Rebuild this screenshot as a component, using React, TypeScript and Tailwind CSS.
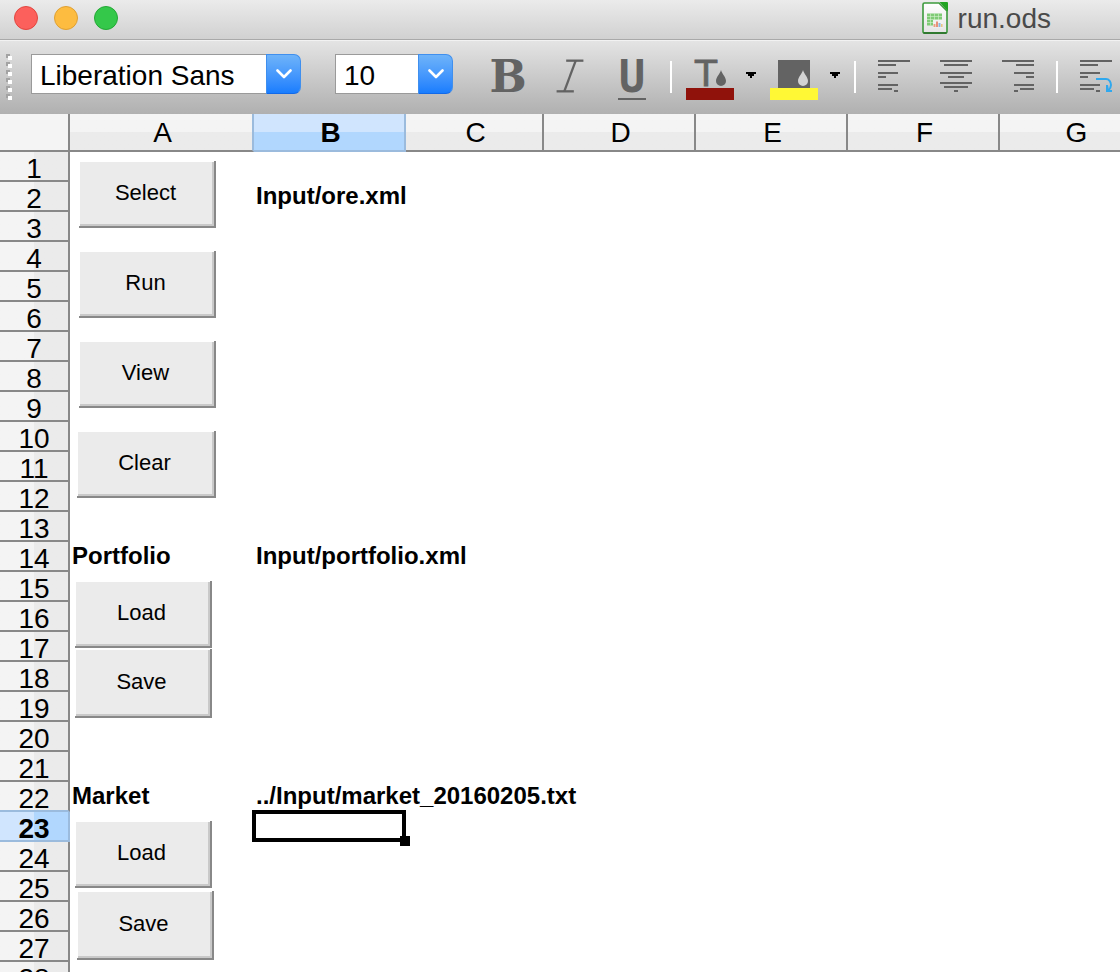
import React from "react";
import { Italic } from "lucide-react";

type Column = { name: string; width: string };

const columns: Column[] = [
  { name: "A", width: "w-[184px]" },
  { name: "B", width: "w-[152px]" },
  { name: "C", width: "w-[138px]" },
  { name: "D", width: "w-[152px]" },
  { name: "E", width: "w-[152px]" },
  { name: "F", width: "w-[152px]" },
  { name: "G", width: "w-[152px]" },
];

const rows = Array.from({ length: 28 }, (_, i) => i + 1);

const cellText: Record<string, string> = {
  B2: "Input/ore.xml",
  A14: "Portfolio",
  B14: "Input/portfolio.xml",
  A22: "Market",
  B22: "../Input/market_20160205.txt",
};

/* Form controls float above the grid, each anchored to a cell. */
const controls: Record<string, { label: string; place: string }> = {
  A1: { label: "Select", place: "left-[9px] top-[9px] w-[137px] h-[67px]" },
  A4: { label: "Run", place: "left-[9px] top-[9px] w-[137px] h-[67px]" },
  A7: { label: "View", place: "left-[9px] top-[9px] w-[137px] h-[67px]" },
  A10: { label: "Clear", place: "left-[7px] top-[9px] w-[139px] h-[67px]" },
  A15: { label: "Load", place: "left-[5px] top-[9px] w-[137px] h-[67px]" },
  A17: { label: "Save", place: "left-[5px] top-[17px] w-[137px] h-[69px]" },
  A23: { label: "Load", place: "left-[5px] top-[9px] w-[137px] h-[67px]" },
  A25: { label: "Save", place: "left-[7px] top-[19px] w-[137px] h-[69px]" },
};

const ACTIVE_COLUMN = "B";
const ACTIVE_ROW = 23;

function TrafficLight({ label, tone }: { label: string; tone: string }) {
  return <button aria-label={label} className={`size-6 rounded-full border ${tone}`} />;
}

function DocumentIcon() {
  return (
    <svg width="26" height="32" viewBox="0 0 26 32" aria-hidden="true">
      <defs>
        <linearGradient id="paper" x1="0" y1="0" x2="0" y2="1">
          <stop offset="0" stopColor="#ffffff" />
          <stop offset="1" stopColor="#e4e4e4" />
        </linearGradient>
      </defs>
      <path d="M2.500 1H17l8 8v20.500a1.500 1.500 0 0 1-1.500 1.500h-21A1.500 1.500 0 0 1 1 29.500v-27A1.500 1.500 0 0 1 2.500 1z" fill="url(#paper)" stroke="#3c9a3c" strokeWidth="1.600" />
      <path d="M1.500 31h23" stroke="#1f6a1f" strokeWidth="1.500" />
      <path d="M17.500 0H25a1 1 0 0 1 1 1v8.500z" fill="#22a322" />
      <rect x="5" y="11.500" width="15" height="12" fill="#7fcb76" />
      <path d="M5 14.500h15M5 17.500h15M5 20.500h15M8.500 11.500v12M12.500 11.500v12M16.500 11.500v12" stroke="#d6f1d2" strokeWidth="0.600" />
      <rect x="11" y="18" width="10" height="7.500" fill="#f1f1f1" />
      <path d="M12.500 25v-3" stroke="#e9a07c" strokeWidth="2" />
      <path d="M15 25v-5.500" stroke="#e8917a" strokeWidth="2" />
      <path d="M17.500 25v-4" stroke="#8ab6e0" strokeWidth="2" />
      <path d="M19.800 25v-3" stroke="#e8c583" strokeWidth="1.600" />
    </svg>
  );
}

function TitleBar() {
  return (
    <header className="flex h-10 shrink-0 items-center border-b border-[#a9a9a9] bg-linear-to-b from-[#ebebeb] to-[#d1d1d1] pr-[69px] pb-[3px] pl-[14px]">
      <div className="flex gap-4">
        <TrafficLight label="Close" tone="border-[#e2463f] bg-[#fc605c]" />
        <TrafficLight label="Minimize" tone="border-[#dfa032] bg-[#fdbc40]" />
        <TrafficLight label="Zoom" tone="border-[#23a835] bg-[#34c84a]" />
      </div>
      <div className="ml-auto flex items-center gap-[10px]">
        <DocumentIcon />
        <h1 className="pt-0.5 text-[28px] leading-8 text-[#4a4a4a]">run.ods</h1>
      </div>
    </header>
  );
}

function Combo({ label, value, width }: { label: string; value: string; width: string }) {
  return (
    <div className={`flex h-10 shrink-0 ${width}`}>
      <input
        aria-label={label}
        defaultValue={value}
        className="h-10 min-w-0 flex-1 border border-r-0 border-[#9a9a9a] bg-white pt-1 pl-2 text-[28px] leading-8 text-black outline-none"
      />
      <button
        aria-label={`${label} list`}
        className="flex w-[35px] shrink-0 items-center justify-center rounded-r-[7px] border border-[#3f8fee] border-b-[#1269e8] bg-linear-to-b from-[#6eb3f9] to-[#187dfe]"
      >
        <svg width="16" height="10" viewBox="0 0 16 10" fill="none" aria-hidden="true">
          <path d="M1.500 1.500L8 8l6.500-6.500" stroke="#fff" strokeWidth="2.600" strokeLinecap="round" strokeLinejoin="round" />
        </svg>
      </button>
    </div>
  );
}

function ToolIcon({ label, width, children }: { label: string; width: number; children: React.ReactNode }) {
  return (
    <button aria-label={label} className="shrink-0">
      <svg width={width} height="48" viewBox={`0 0 ${width} 48`} fill="#636363" className="block overflow-visible" aria-hidden="true">
        {children}
      </svg>
    </button>
  );
}

function Lines({ items }: { items: number[][] }) {
  return (
    <>
      {items.map(([x, y, w], i) => (
        <rect key={i} x={x} y={y} width={w} height="2" />
      ))}
    </>
  );
}

function DropArrow({ label }: { label: string }) {
  return (
    <ToolIcon label={label} width={10}>
      <path d="M0 18h10v2H8v2H6v2H4v-2H2v-2H0z" fill="#000" />
    </ToolIcon>
  );
}

function Separator() {
  return <div className="mt-[7px] h-8 w-0.5 shrink-0 bg-white" />;
}

function Toolbar() {
  return (
    <div
      role="toolbar"
      aria-label="Formatting"
      className="flex h-[74px] shrink-0 items-start overflow-hidden border-t border-[#f2f2f2] bg-linear-to-b from-[#e4e4e4] to-[#b0b0b0] pt-[13px] pl-1.5"
    >
      <svg width="6" height="48" viewBox="0 0 6 48" className="shrink-0" aria-hidden="true">
        {[0, 8, 16, 24, 32, 40].map((y) => (
          <g key={y}>
            <rect x="0" y={y} width="4" height="4" fill="#a3a3a3" />
            <rect x="2" y={y + 2} width="4" height="4" fill="#fff" />
          </g>
        ))}
      </svg>
      <div className="ml-[19px] flex shrink-0 gap-[34px]">
        <Combo label="Font name" value="Liberation Sans" width="w-[270px]" />
        <Combo label="Font size" value="10" width="w-[118px]" />
      </div>
      <div className="ml-[39px] flex shrink-0 gap-[30px]">
        <ToolIcon label="Bold" width={32}>
          <text x="16" y="38" textAnchor="middle" className="font-['DejaVu_Serif'] text-[44px] font-bold">B</text>
        </ToolIcon>
        <ToolIcon label="Italic" width={32}>
          <Italic x={-7} y={-1} width={46} height={46} stroke="#636363" strokeWidth={1.2} strokeLinecap="butt" />
        </ToolIcon>
        <ToolIcon label="Underline" width={32}>
          <text x="16" y="38" textAnchor="middle" className="font-['DejaVu_Sans_Mono'] text-[44px] font-bold">U</text>
          <rect x="2" y="44" width="28" height="2" />
        </ToolIcon>
      </div>
      <div className="ml-[22px] flex shrink-0 gap-[14px]">
        <Separator />
        <div className="flex gap-3">
          <ToolIcon label="Font color" width={48}>
            <text x="20" y="32" textAnchor="middle" stroke="#636363" strokeWidth="0.8" className="font-['DejaVu_Sans'] text-[36px]">T</text>
            <path d="M35 16c1 4 5 7 5 11a5 5 0 0 1-10 0c0-4 4-7 5-11z" />
            <rect y="34" width="48" height="12" fill="#90120b" />
          </ToolIcon>
          <DropArrow label="Font color list" />
        </div>
        <div className="flex gap-3">
          <ToolIcon label="Highlighting color" width={48}>
            <rect x="8" y="6" width="32" height="28" />
            <path d="M33 16c1 4 5 7 5 11a5 5 0 0 1-10 0c0-4 4-7 5-11z" fill="#d3d3d3" />
            <rect y="34" width="48" height="12" fill="#fff835" />
          </ToolIcon>
          <DropArrow label="Highlighting color list" />
        </div>
        <Separator />
      </div>
      <div className="ml-[22px] flex shrink-0 gap-[30px]">
        <ToolIcon label="Align left" width={32}>
          <Lines items={[[0, 6, 32], [0, 10, 18], [0, 18, 20], [0, 22, 8], [0, 30, 20], [0, 34, 14], [16, 36, 4]]} />
        </ToolIcon>
        <ToolIcon label="Align center" width={32}>
          <Lines items={[[0, 6, 32], [4, 10, 24], [0, 18, 32], [8, 22, 16], [0, 28, 32], [4, 32, 24], [14, 36, 4]]} />
        </ToolIcon>
        <ToolIcon label="Align right" width={32}>
          <Lines items={[[0, 6, 32], [14, 10, 18], [12, 18, 20], [24, 22, 8], [12, 30, 20], [18, 34, 14], [12, 36, 4]]} />
        </ToolIcon>
      </div>
      <div className="ml-[22px] flex shrink-0 gap-[22px]">
        <Separator />
        <ToolIcon label="Wrap text" width={32}>
          <Lines items={[[0, 6, 32], [0, 10, 18], [0, 18, 20], [0, 22, 8], [0, 30, 20], [0, 34, 14], [16, 36, 4]]} />
          <path d="M16 25h10c3 0 5 3 5 6 0 2-1 4-3 6" fill="none" stroke="#2fa8ee" strokeWidth="2" />
          <path d="M26 31v7h6v-2h-3l-1-5z" fill="#2fa8ee" />
        </ToolIcon>
      </div>
    </div>
  );
}

function ColumnHeader({ column, index }: { column: Column; index: number }) {
  const active = column.name === ACTIVE_COLUMN;
  const beforeActive = columns[index + 1]?.name === ACTIVE_COLUMN;
  const tone = active
    ? "border-[#9bbbdd] bg-linear-to-b from-[#d0e5fe] from-50% to-[#b1d7fe] to-50% font-bold"
    : beforeActive
      ? "border-r-[#9bbbdd] border-b-[#888888] bg-linear-to-b from-[#f4f4f4] from-50% to-[#ebebeb] to-50% font-normal"
      : "border-[#888888] bg-linear-to-b from-[#f4f4f4] from-50% to-[#ebebeb] to-50% font-normal";
  return (
    <th scope="col" className={`border-r-2 border-b-2 p-0 text-center ${column.width} ${tone}`}>
      <div className="h-9 pl-[3px] leading-[38px]">{column.name}</div>
    </th>
  );
}

function RowHeader({ row }: { row: number }) {
  const active = row === ACTIVE_ROW;
  const beforeActive = row + 1 === ACTIVE_ROW;
  const tone = active
    ? "border-[#9bbbdd] bg-linear-to-r from-[#d0e5fe] from-50% to-[#b1d7fe] to-50% font-bold"
    : beforeActive
      ? "border-r-[#888888] border-b-[#9bbbdd] bg-linear-to-r from-[#f4f4f4] from-50% to-[#ebebeb] to-50% font-normal"
      : "border-[#888888] bg-linear-to-r from-[#f4f4f4] from-50% to-[#ebebeb] to-50% font-normal";
  return (
    <th scope="row" className={`border-r-2 border-b-2 p-0 text-center text-[28px] ${tone}`}>
      <div className="h-7 leading-[34px]">{row}</div>
    </th>
  );
}

function Cell({ id }: { id: string }) {
  const control = controls[id];
  return (
    <td className="relative p-0 text-2xl leading-[28px] font-bold whitespace-nowrap">
      {cellText[id] && <span className="block h-[30px] pl-0.5">{cellText[id]}</span>}
      {control && (
        <button
          className={`absolute z-10 border-r-2 border-b-2 border-[#888888] bg-[#ebebeb] pr-0.5 pb-0.5 text-[22px] leading-6 font-normal shadow-[inset_1px_1px_0_#ffffff,inset_-2px_-2px_0_#c9c9c9] ${control.place}`}
        >
          {control.label}
        </button>
      )}
      {id === `${ACTIVE_COLUMN}${ACTIVE_ROW}` && (
        <div className="absolute -top-0.5 right-0 bottom-0 -left-0.5 z-10 border-4 border-black">
          <div className="absolute -right-2 -bottom-2 size-[10px] bg-black" />
        </div>
      )}
    </td>
  );
}

export default function App() {
  return (
    <div className="flex h-screen flex-col overflow-hidden bg-white font-['Liberation_Sans',Arial,sans-serif] text-black">
      <TitleBar />
      <Toolbar />
      <main className="min-h-0 flex-1 overflow-hidden">
        <table className="w-[1152px] table-fixed border-separate border-spacing-0">
          <thead className="text-[28px]">
            <tr>
              <td className="w-[70px] border-r-2 border-b-2 border-[#888888] bg-[#f4f4f4] p-0" />
              {columns.map((column, index) => (
                <ColumnHeader key={column.name} column={column} index={index} />
              ))}
            </tr>
          </thead>
          <tbody>
            {rows.map((row) => (
              <tr key={row} className="h-[30px]">
                <RowHeader row={row} />
                {columns.map((column) => (
                  <Cell key={column.name} id={`${column.name}${row}`} />
                ))}
              </tr>
            ))}
          </tbody>
        </table>
      </main>
    </div>
  );
}
